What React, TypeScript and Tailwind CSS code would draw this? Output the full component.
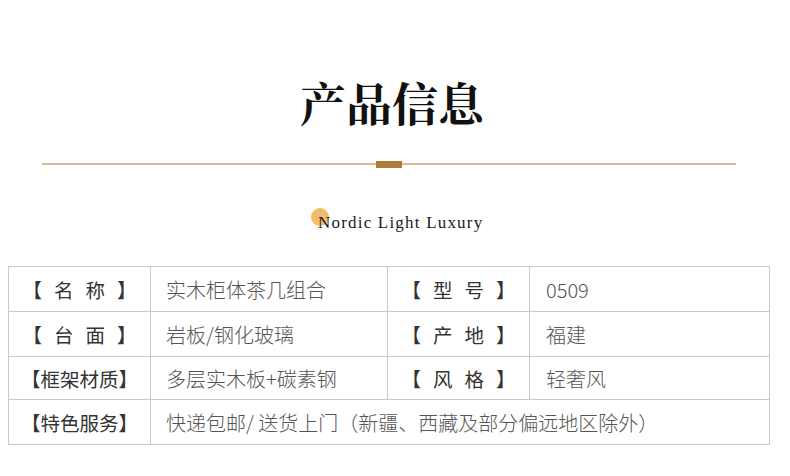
import React from "react";

const CJK = { fontFamily: '"Noto Sans CJK SC", "Noto Sans", sans-serif' };

function Label({ chars }: { chars: string[] }) {
    // spaced labels like 【 名 称 】 use a wider gap than the six-char ones
    const gap = chars.length === 4 ? "gap-[12px]" : "gap-0";
    return (
        <div className={`flex items-center justify-center ${gap} text-[19.5px] text-[#333]`}>
            {chars.map((c, i) => (
                <span key={i}>{c}</span>
            ))}
        </div>
    );
}

const ROWS = [
    { a: ["【", "名", "称", "】"], av: "实木柜体茶几组合", b: ["【", "型", "号", "】"], bv: "0509", h: "h-[45px]" },
    { a: ["【", "台", "面", "】"], av: "岩板/钢化玻璃", b: ["【", "产", "地", "】"], bv: "福建", h: "h-[45px]" },
    { a: ["【", "框", "架", "材", "质", "】"], av: "多层实木板+碳素钢", b: ["【", "风", "格", "】"], bv: "轻奢风", h: "h-[43px]" },
];

export default function App() {
    return (
        <div className="w-[790px] h-[476px] bg-white overflow-hidden" style={CJK}>
            <h1
                className="pt-[78px] text-center text-[46px] leading-[46px] font-bold text-[#111] pr-[6px]"
                style={{ fontFamily: '"Noto Serif CJK SC", "Noto Sans CJK SC", serif' }}
            >
                产品信息
            </h1>

            {/* divider */}
            <div className="mt-[39px] ml-[42px] w-[694px] h-[2px] bg-[#dcb994] flex items-center justify-center">
                <div className="w-[26px] h-[7px] bg-[#b07a3a] shrink-0" />
            </div>

            <div className="mt-[46px] ml-[318px] h-[20px] flex items-center">
                <span className="relative">
                    <span className="absolute left-[-7px] top-[-1px] w-[18px] h-[18px] rounded-full bg-[#f3bb6c]" />
                    <span
                        className="relative text-[17px] leading-[20px] tracking-[1.2px] text-[#1a1a1a]"
                        style={{ fontFamily: '"Liberation Serif", serif' }}
                    >
                        Nordic Light Luxury
                    </span>
                </span>
            </div>

            <div className="mt-[35px] ml-[8px] w-[762px] grid grid-cols-[142px_237px_142px_240px] border-l border-t border-[#c9c9c9]">
                {ROWS.map((r, i) => (
                    <React.Fragment key={i}>
                        <div className={`${r.h} border-r border-b border-[#c9c9c9] flex items-center justify-center pt-[2px]`}>
                            <Label chars={r.a} />
                        </div>
                        <div className={`${r.h} border-r border-b border-[#c9c9c9] flex items-center pl-[15px] pt-[2px] text-[20px] font-light text-[#555]`}>
                            {r.av}
                        </div>
                        <div className={`${r.h} border-r border-b border-[#c9c9c9] flex items-center justify-center pt-[2px]`}>
                            <Label chars={r.b} />
                        </div>
                        <div className={`${r.h} border-r border-b border-[#c9c9c9] flex items-center pl-[16px] pt-[2px] text-[20px] font-light text-[#555]`}>
                            {r.bv}
                        </div>
                    </React.Fragment>
                ))}
                <div className="h-[45px] border-r border-b border-[#c9c9c9] flex items-center justify-center pt-[2px]">
                    <Label chars={["【", "特", "色", "服", "务", "】"]} />
                </div>
                <div className="col-span-3 h-[45px] border-r border-b border-[#c9c9c9] flex items-center pl-[15px] pt-[2px] text-[20px] font-light text-[#555]">
                    快递包邮/ 送货上门（新疆、西藏及部分偏远地区除外）
                </div>
            </div>
        </div>
    );
}
